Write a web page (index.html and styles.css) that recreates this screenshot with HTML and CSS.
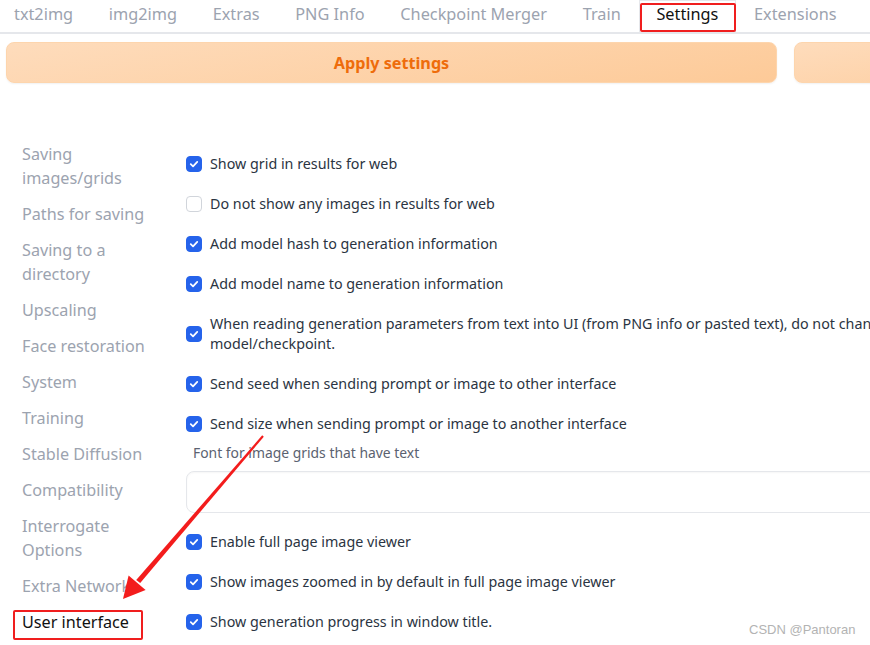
FILE: index.html
```html
<!DOCTYPE html>
<html>
<head>
<meta charset="utf-8">
<link rel="stylesheet" href="styles.css">
</head>
<body>
<div class="page">
  <nav class="tabs">
    <div class="tab">txt2img</div>
    <div class="tab">img2img</div>
    <div class="tab">Extras</div>
    <div class="tab">PNG Info</div>
    <div class="tab">Checkpoint Merger</div>
    <div class="tab">Train</div>
    <div class="tab active">Settings</div>
    <div class="tab">Extensions</div>
  </nav>

  <div class="actions">
    <button class="btn btn-apply">Apply settings</button>
    <button class="btn btn-other"></button>
  </div>

  <div class="content">
    <aside class="sidebar">
      <div class="side-item">Saving images/grids</div>
      <div class="side-item">Paths for saving</div>
      <div class="side-item">Saving to a directory</div>
      <div class="side-item">Upscaling</div>
      <div class="side-item">Face restoration</div>
      <div class="side-item">System</div>
      <div class="side-item">Training</div>
      <div class="side-item">Stable Diffusion</div>
      <div class="side-item">Compatibility</div>
      <div class="side-item">Interrogate Options</div>
      <div class="side-item">Extra Networks</div>
      <div class="side-item current">User interface</div>
    </aside>

    <main class="settings">
      <div class="group">
        <label class="row"><span class="cb on"></span><span class="txt">Show grid in results for web</span></label>
        <label class="row"><span class="cb"></span><span class="txt">Do not show any images in results for web</span></label>
        <label class="row"><span class="cb on"></span><span class="txt">Add model hash to generation information</span></label>
        <label class="row"><span class="cb on"></span><span class="txt">Add model name to generation information</span></label>
        <label class="row"><span class="cb on"></span><span class="txt">When reading generation parameters from text into UI (from PNG info or pasted text), do not change the selected model/checkpoint.</span></label>
        <label class="row"><span class="cb on"></span><span class="txt">Send seed when sending prompt or image to other interface</span></label>
        <label class="row"><span class="cb on"></span><span class="txt">Send size when sending prompt or image to another interface</span></label>
      </div>
      <div class="field">
        <div class="field-label">Font for image grids that have text</div>
        <div class="input"></div>
      </div>
      <div class="group group-last">
        <label class="row"><span class="cb on"></span><span class="txt">Enable full page image viewer</span></label>
        <label class="row"><span class="cb on"></span><span class="txt">Show images zoomed in by default in full page image viewer</span></label>
        <label class="row"><span class="cb on"></span><span class="txt">Show generation progress in window title.</span></label>
      </div>
    </main>
  </div>

  <div class="mark mark-tab"></div>
  <div class="mark mark-side"></div>
  <svg class="arrow" width="870" height="645" viewBox="0 0 870 645">
    <polygon points="263.8,436.7 262.2,435.3 136.2,580 140.2,583" fill="#f31c1c"/>
    <polygon points="123,599 128.6,575.6 145.6,590" fill="#f31c1c"/>
  </svg>
  <div class="watermark">CSDN @Pantoran</div>
</div>
</body>
</html>
```

FILE: styles.css
```css
* { box-sizing: border-box; }
html, body { margin: 0; padding: 0; background: #fff; }
body {
  width: 870px;
  height: 645px;
  overflow: hidden;
  font-family: "Noto Sans", "Open Sans", sans-serif;
}
.page { position: relative; width: 870px; height: 645px; }

.tabs {
  display: flex;
  height: 34px;
  border-bottom: 2px solid #e5e7eb;
  white-space: nowrap;
}
.tab {
  padding: 0 16.85px;
  font-size: 16.3px;
  line-height: 26px;
  color: #9ca3af;
  border: 1px solid transparent;
  border-bottom: none;
}
.tab:first-child { padding-left: 13px; }
.tab.active {
  color: #111;
  background: #fff;
  border-color: #e5e7eb;
}

.actions {
  display: flex;
  gap: 17px;
  padding: 8px 0 0 6px;
  width: 1200px;
}
.btn {
  height: 41px;
  border-radius: 8px;
  border: 1px solid #fdd5ad;
  background: linear-gradient(170deg, #fedcbc 0%, #fdca98 100%);
  box-shadow: 0 1px 2px rgba(0,0,0,0.06);
  font-family: inherit;
  font-size: 16.2px;
  font-weight: 700;
  color: #ee6c0b;
  padding: 1px 0 0;
}
.btn-apply { width: 771px; }
.btn-other { width: 400px; }

.content {
  display: flex;
  width: 1200px;
}
.sidebar {
  width: 186px;
  flex: none;
  padding: 59px 0 0 22px;
  display: flex;
  flex-direction: column;
  gap: 12px;
}
.side-item {
  width: 132px;
  font-size: 16.2px;
  line-height: 24px;
  color: #9ca3af;
}
.side-item.current { color: #111; }

.settings {
  padding-top: 71px;
  width: 1000px;
}
.group {
  display: flex;
  flex-direction: column;
  gap: 20px;
}
.row {
  display: flex;
  align-items: center;
  gap: 8px;
  font-size: 14.3px;
  line-height: 20px;
  color: #2b3442;
}
.txt { width: 790px; }
.cb {
  flex: none;
  width: 16px;
  height: 16px;
  border-radius: 4px;
  border: 1px solid #d1d5db;
  background: #fff;
}
.cb.on {
  border-color: #2563eb;
  background: #2563eb url("data:image/svg+xml;utf8,<svg xmlns='http://www.w3.org/2000/svg' viewBox='0 0 16 16'><path d='M4.3 8.2 L6.9 10.6 L11.7 5.6' fill='none' stroke='white' stroke-width='2' stroke-linecap='round' stroke-linejoin='round'/></svg>") center/100% no-repeat;
}

.field { margin-top: 9px; }
.field-label {
  padding-left: 7px;
  font-size: 13.9px;
  line-height: 20px;
  color: #5b6270;
}
.input {
  margin-top: 8px;
  height: 42px;
  border: 1px solid #e5e7eb;
  border-radius: 8px;
  box-shadow: inset 0 1px 2px rgba(0,0,0,0.04);
}
.group-last { margin-top: 19px; }

.mark {
  position: absolute;
  border: 2px solid #f01e1e;
  border-radius: 2px;
}
.mark-tab { left: 640px; top: 3px; width: 96px; height: 29px; }
.mark-side { left: 13px; top: 610px; width: 130px; height: 30px; }
.arrow { position: absolute; left: 0; top: 0; }
.watermark {
  position: absolute;
  left: 749px;
  top: 622px;
  font-family: "Liberation Sans", Arial, sans-serif;
  font-size: 13px;
  color: #b3b3b3;
}
```
